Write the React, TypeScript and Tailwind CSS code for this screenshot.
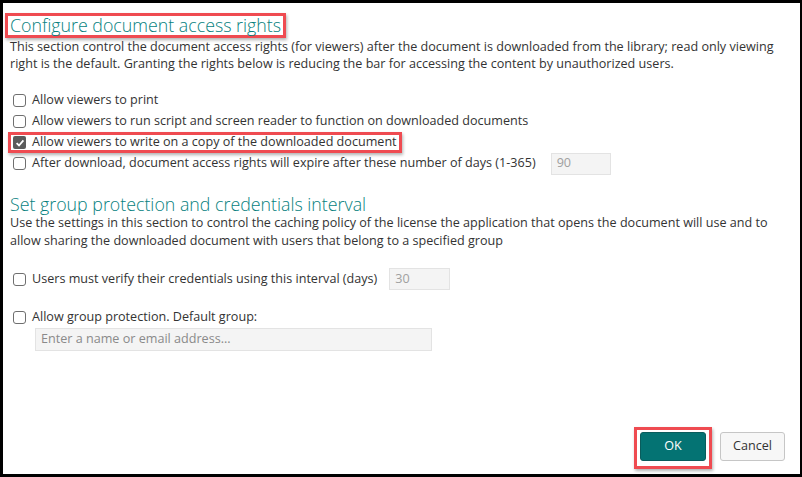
import React from 'react'

const font = { fontFamily: '"Open Sans", "Noto Sans", sans-serif' }

function Box({ checked }: { checked?: boolean }) {
    if (checked) {
        return (
            <span className='flex h-[13px] w-[13px] shrink-0 items-center justify-center rounded-[2px] bg-[#5b5b5b]'>
                <svg width="10" height="10" viewBox="0 0 10 10">
                    <path d="M1.6 5.2 L4 7.5 L8.4 2.4" fill="none" stroke="#fff" strokeWidth="1.8" />
                </svg>
            </span>
        )
    }
    return <span className='h-[13px] w-[13px] shrink-0 rounded-[3px] border border-[#6f6f6f] bg-white' />
}

function Row({ label, checked }: { label: string; checked?: boolean }) {
    return (
        <div className='flex h-[21px] items-center gap-[6px] pl-[3px]'>
            <Box checked={checked} />
            <span>{label}</span>
        </div>
    )
}

export default function App() {
    return (
        <div style={font} className='flex h-[477px] w-[802px] flex-col border-b-[3px] border-l-[3px] border-r-[2px] border-t-[3px] border-black bg-white text-[12.6px] text-[#333]'>
            <div className='pl-[7px] pr-[10px]'>
                <div className='mt-[10px] -ml-[5px] inline-block border-[3px] border-[#ef4b51] px-[2px] shadow-[1px_2px_3px_rgba(0,0,0,0.3)]'>
                    <h1 className='text-[17.8px] font-light leading-[19px] text-[#067f7e]'>Configure document access rights</h1>
                </div>
                <p className='max-w-[770px] leading-[17px]'>
                    This section control the document access rights (for viewers) after the document is downloaded from the library; read only viewing right is the default. Granting the rights below is reducing the bar for accessing the content by unauthorized users.
                </p>

                <div className='mt-[18px]'>
                    <Row label='Allow viewers to print' />
                    <Row label='Allow viewers to run script and screen reader to function on downloaded documents' />
                    <div className='-ml-[2px] inline-flex h-[21px] items-center gap-[6px] border-[3px] border-[#ef4b51] pl-[2px] pr-[2px] shadow-[1px_2px_3px_rgba(0,0,0,0.3)]'>
                        <Box checked />
                        <span>Allow viewers to write on a copy of the downloaded document</span>
                    </div>
                    <div className='flex h-[21px] items-center gap-[6px] pl-[3px]'>
                        <Box />
                        <span>After download, document access rights will expire after these number of days (1-365)</span>
                        <div className='ml-[9px] flex h-[22px] w-[60px] items-center border border-[#e3e3e3] bg-[#f4f4f4] px-[5px] text-[#a0a0a0]'>90</div>
                    </div>
                </div>

                <h2 className='mt-[20px] text-[17.8px] font-light leading-[20px] text-[#067f7e]'>Set group protection and credentials interval</h2>
                <p className='max-w-[785px] leading-[18px]'>
                    Use the settings in this section to control the caching policy of the license the application that opens the document will use and to allow sharing the downloaded document with users that belong to a specified group
                </p>

                <div className='mt-[18px] flex h-[22px] items-center gap-[6px] pl-[3px]'>
                    <Box />
                    <span>Users must verify their credentials using this interval (days)</span>
                    <div className='ml-[6px] flex h-[22px] w-[61px] items-center border border-[#e3e3e3] bg-[#f4f4f4] px-[5px] text-[#a0a0a0]'>30</div>
                </div>

                <div className='mt-[17px] flex h-[21px] items-center gap-[6px] pl-[3px]'>
                    <Box />
                    <span>Allow group protection. Default group:</span>
                </div>
                <div className='ml-[25px] flex h-[23px] w-[397px] items-center border border-[#e3e3e3] bg-[#f4f4f4] px-[5px] text-[#8a8a8a]'>
                    Enter a name or email address...
                </div>
            </div>

            <div className='mt-auto flex items-start justify-end gap-[8px] pb-[5px] pr-[15px]'>
                <div className='border-[3px] border-[#ef4b51] px-[3px] pb-[5px] pt-[2px] shadow-[1px_2px_3px_rgba(0,0,0,0.3)]'>
                    <button className='h-[29px] w-[66px] rounded-[3px] border border-[#0a5c5c] bg-[#047373] text-white'>OK</button>
                </div>
                <button className='mt-[5px] h-[29px] w-[65px] rounded-[3px] border border-[#c6c6c6] bg-[#f7f7f7] text-[#333]'>Cancel</button>
            </div>
        </div>
    )
}
